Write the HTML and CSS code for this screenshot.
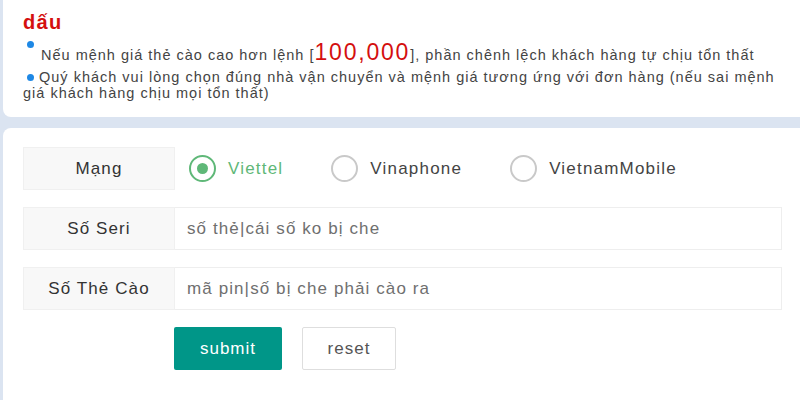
FILE: index.html
```html
<!DOCTYPE html>
<html lang="vi">
<head>
<meta charset="utf-8">
<link rel="stylesheet" href="styles.css">
</head>
<body>
<div class="notice">
  <div class="title">dấu</div>
  <p class="line first"><span class="dot raised"></span><span class="txt">Nếu mệnh giá thẻ cào cao hơn lệnh [<span class="amount">100,000</span>], phần chênh lệch khách hàng tự chịu tổn thất</span></p>
  <p class="line second"><span class="dot"></span> Quý khách vui lòng chọn đúng nhà vận chuyển và mệnh giá tương ứng với đơn hàng (nếu sai mệnh giá khách hàng chịu mọi tổn thất)</p>
</div>
<div class="gap"></div>
<div class="formcard">
  <div class="row">
    <div class="label">Mạng</div>
    <div class="radios">
      <div class="radio on"><span class="circle"><span class="inner"></span></span><span class="rlabel">Viettel</span></div>
      <div class="radio"><span class="circle"></span><span class="rlabel">Vinaphone</span></div>
      <div class="radio"><span class="circle"></span><span class="rlabel">VietnamMobile</span></div>
    </div>
  </div>
  <div class="row">
    <div class="label">Số Seri</div>
    <div class="input">số thẻ|cái số ko bị che</div>
  </div>
  <div class="row">
    <div class="label">Số Thẻ Cào</div>
    <div class="input">mã pin|số bị che phải cào ra</div>
  </div>
  <div class="buttons">
    <button class="btn primary">submit</button>
    <button class="btn plain">reset</button>
  </div>
</div>
</body>
</html>
```
FILE: styles.css
```css
html, body {
  margin: 0;
  padding: 0;
}
body {
  background: #dbe4f1;
  font-family: "Liberation Sans", Arial, sans-serif;
  color: #333;
  width: 800px;
  height: 400px;
  overflow: hidden;
}
.notice {
  background: #fff;
  margin-left: 3px;
  height: 117px;
  border-bottom-left-radius: 8px;
  padding: 10px 0 0 20px;
  box-sizing: border-box;
}
.title {
  color: #d40f0f;
  font-weight: bold;
  font-size: 20px;
  line-height: 24px;
  letter-spacing: 1.3px;
}
.line {
  margin: 0;
  font-size: 14.5px;
  letter-spacing: 1px;
  color: #444;
}
.line.first {
  display: flex;
  align-items: flex-start;
  margin-top: 5px;
  height: 28px;
}
.line.first .txt {
  margin-left: 7px;
  margin-top: 1px;
  line-height: 24px;
}
.amount {
  color: #d40f0f;
  font-size: 23px;
  letter-spacing: 1.8px;
}
.dot {
  display: inline-block;
  width: 7px;
  height: 7px;
  border-radius: 50%;
  background: #1e88e5;
  vertical-align: 1px;
}
.dot.raised {
  margin-top: 2px;
  margin-left: 4px;
  flex: none;
}
.line.second {
  line-height: 16px;
  margin-top: 2px;
  padding-right: 8px;
}
.line.second .dot {
  margin-left: 4px;
}
.gap {
  height: 11px;
}
.formcard {
  background: #fff;
  margin-left: 3px;
  border-top-left-radius: 8px;
  height: 272px;
  padding: 19px 18px 0 20px;
  box-sizing: border-box;
  display: flex;
  flex-direction: column;
  gap: 17px;
}
.row {
  display: flex;
  height: 43px;
  font-size: 17px;
  letter-spacing: 1.1px;
}
.label {
  width: 152px;
  flex: none;
  background: #f8f8f8;
  border: 1px solid #f0f0f0;
  box-sizing: border-box;
  display: flex;
  align-items: center;
  justify-content: center;
  color: #333;
}
.input {
  flex: 1;
  border: 1px solid #eee;
  border-left: none;
  box-sizing: border-box;
  display: flex;
  align-items: center;
  padding-left: 12px;
  color: #6f6f6f;
}
.radios {
  display: flex;
  align-items: center;
  padding-left: 14px;
  letter-spacing: 1.2px;
}
.radio {
  display: flex;
  align-items: center;
  margin-right: 48px;
}
.circle {
  width: 27px;
  height: 27px;
  border: 2px solid #c9c9c9;
  border-radius: 50%;
  box-sizing: border-box;
  display: flex;
  align-items: center;
  justify-content: center;
}
.rlabel {
  margin-left: 12px;
  color: #444;
}
.radio.on .circle {
  border-color: #5fb878;
}
.radio.on .inner {
  width: 11px;
  height: 11px;
  border-radius: 50%;
  background: #5fb878;
}
.radio.on .rlabel {
  color: #5fb878;
}
.buttons {
  display: flex;
  gap: 20px;
  padding-left: 151px;
}
.btn {
  height: 43px;
  font-family: "Liberation Sans", Arial, sans-serif;
  font-size: 17px;
  letter-spacing: 1px;
  border-radius: 2px;
  cursor: pointer;
}
.btn.primary {
  width: 108px;
  background: #009688;
  color: #fff;
  border: none;
}
.btn.plain {
  width: 94px;
  background: #fff;
  color: #555;
  border: 1px solid #dedede;
}
```
